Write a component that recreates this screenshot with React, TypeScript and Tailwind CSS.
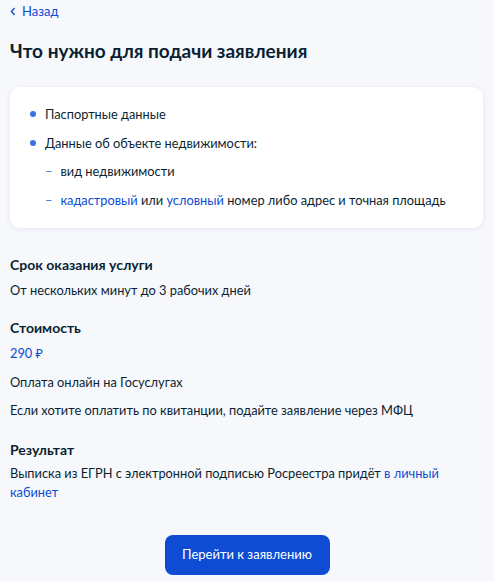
import React from "react";

export default function App() {
  return (
    <div
      className="min-h-[581px] w-[494px] bg-[#f6f8fb] pl-[10px] pr-[11px] text-[#0b1f33]"
      style={{ fontFamily: "Lato, 'Noto Sans', sans-serif" }}
    >
      <a className="flex h-[22px] items-center gap-[6px] text-[13px] leading-[22px] text-[#0d4cd3]">
        <svg width="6" height="9" viewBox="0 0 6 9" className="mt-[1px]">
          <path d="M4.5 1 L1.5 4.5 L4.5 8" fill="none" stroke="#0d4cd3" strokeWidth="1.4" />
        </svg>
        <span>Назад</span>
      </a>

      <h1 className="mt-[15px] text-[19px] font-bold leading-[28px] text-[#0b1f33]">
        Что нужно для подачи заявления
      </h1>

      <div className="mt-[22px] rounded-[10px] bg-white pb-[18px] pl-[22px] pt-[17px] shadow-[0_1px_6px_rgba(0,40,100,0.08)]">
        <div className="flex items-center text-[12.8px] leading-[20px]">
          <span className="ml-[-2px] mr-[9px] h-[6px] w-[6px] rounded-full bg-[#3b72e8]" />
          Паспортные данные
        </div>
        <div className="mt-[9px] flex items-center text-[12.8px] leading-[20px]">
          <span className="ml-[-2px] mr-[9px] h-[6px] w-[6px] rounded-full bg-[#3b72e8]" />
          Данные об объекте недвижимости:
        </div>
        <div className="mt-[8px] flex items-center pl-[13px] text-[12.8px] leading-[20px]">
          <span className="mr-[8px] text-[#3b72e8]">–</span>
          вид недвижимости
        </div>
        <div className="mt-[9px] flex items-center pl-[13px] text-[12.8px] leading-[20px]">
          <span className="mr-[8px] text-[#3b72e8]">–</span>
          <span>
            <span className="text-[#0d4cd3]">кадастровый</span> или{" "}
            <span className="text-[#0d4cd3]">условный</span> номер либо адрес и точная площадь
          </span>
        </div>
      </div>

      <h2 className="mt-[27px] text-[14px] font-bold leading-[20px]">Срок оказания услуги</h2>
      <p className="mt-[5px] text-[12.8px] leading-[20px]">От нескольких минут до 3 рабочих дней</p>

      <h2 className="mt-[18px] text-[14px] font-bold leading-[20px]">Стоимость</h2>
      <p className="mt-[5px] text-[12.8px] leading-[20px] text-[#0d4cd3]">290 ₽</p>
      <p className="mt-[9px] text-[12.8px] leading-[20px]">Оплата онлайн на Госуслугах</p>
      <p className="mt-[8px] text-[12.8px] leading-[20px]">
        Если хотите оплатить по квитанции, подайте заявление через МФЦ
      </p>

      <h2 className="mt-[20px] text-[14px] font-bold leading-[20px]">Результат</h2>
      <p className="mt-[4px] text-[12.8px] leading-[19px]">
        Выписка из ЕГРН с электронной подписью Росреестра придёт{" "}
        <span className="text-[#0d4cd3]">в личный кабинет</span>
      </p>

      <div className="mt-[33px] flex justify-center pl-[1px]">
        <button className="h-[40px] w-[165px] rounded-[8px] bg-[#0d4cd3] text-[13px] text-white">
          Перейти к заявлению
        </button>
      </div>
    </div>
  );
}
